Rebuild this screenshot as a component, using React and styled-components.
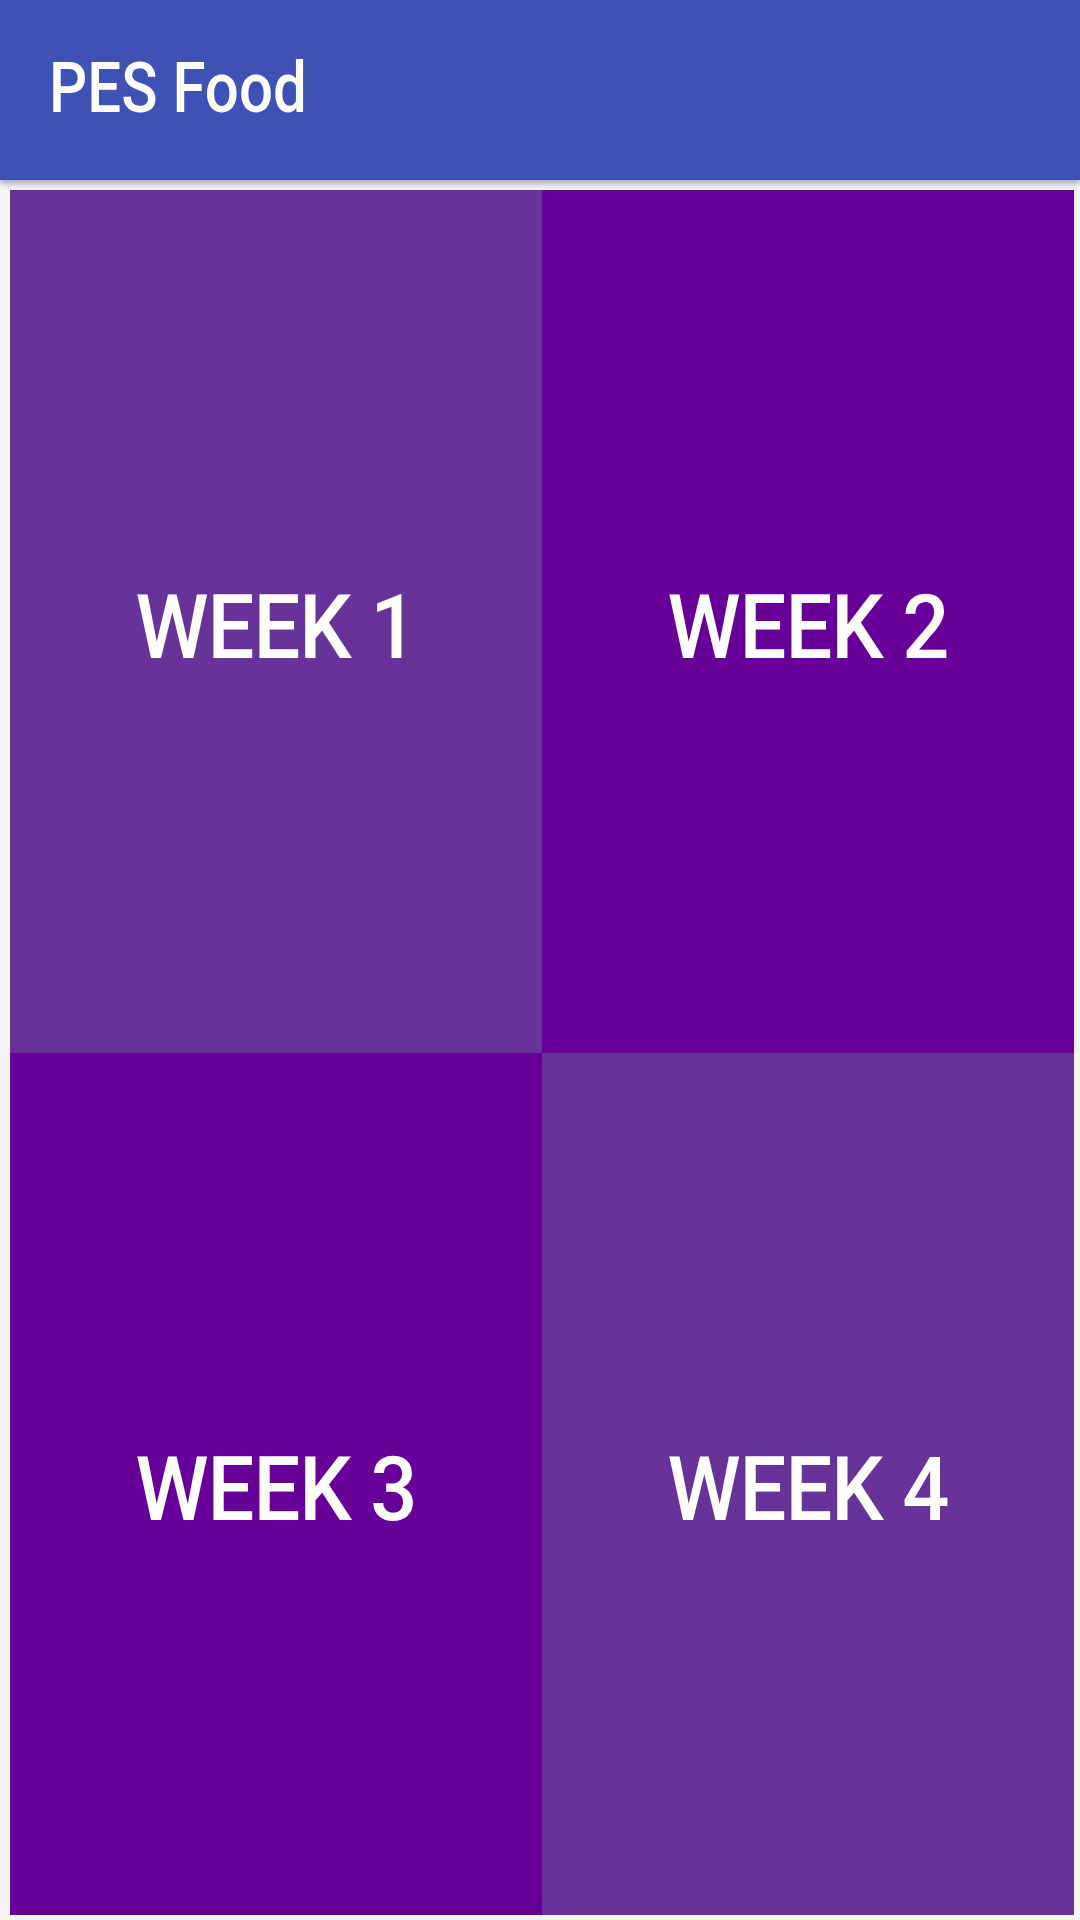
import React from 'react';
import styled, { createGlobalStyle } from 'styled-components';

const GlobalStyle = createGlobalStyle`
  html, body {
    margin: 0;
    padding: 0;
    background: #f5f5f5;
    font-family: Roboto, "Noto Sans", "Liberation Sans", sans-serif;
  }
`;

const Screen = styled.div`
  width: 1080px;
  height: 1920px;
  display: flex;
  flex-direction: column;
  background: #f5f5f5;
  overflow: hidden;
`;

const Toolbar = styled.header`
  height: 180px;
  flex-shrink: 0;
  background: #3f51b5;
  display: flex;
  align-items: center;
  padding-left: 49px;
  box-shadow: 0 3px 7px rgba(0, 0, 0, 0.35);
  position: relative;
  z-index: 1;
`;

const Title = styled.h1`
  margin: 0 0 4px 0;
  color: #fff;
  font-size: 60px;
  font-weight: 500;
  display: inline-block;
  transform: scaleY(1.16);
`;

const Content = styled.main`
  flex: 1;
  padding: 10px 6px 5px 10px;
  display: grid;
  grid-template-columns: 1fr 1fr;
  grid-template-rows: 1fr 1fr;
`;

const WeekTile = styled.button`
  border: none;
  margin: 0;
  padding: 12px 0 0 0;
  background: ${p => (p.dark ? '#660099' : '#663399')};
  display: flex;
  align-items: center;
  justify-content: center;
  cursor: pointer;
`;

const WeekLabel = styled.span`
  color: #fff;
  font-family: Roboto, "Noto Sans", sans-serif;
  font-size: 83px;
  font-weight: 500;
  display: inline-block;
  transform: scaleY(1.08);
  letter-spacing: -1px;
`;

const weeks = [
  { n: 1, dark: false },
  { n: 2, dark: true },
  { n: 3, dark: true },
  { n: 4, dark: false },
];

const App = () => {
  return (
    <Screen>
      <GlobalStyle />
      <Toolbar>
        <Title>PES Food</Title>
      </Toolbar>
      <Content>
        {weeks.map(w => (
          <WeekTile key={w.n} dark={w.dark}>
            <WeekLabel>WEEK {w.n}</WeekLabel>
          </WeekTile>
        ))}
      </Content>
    </Screen>
  );
};

export default App;
